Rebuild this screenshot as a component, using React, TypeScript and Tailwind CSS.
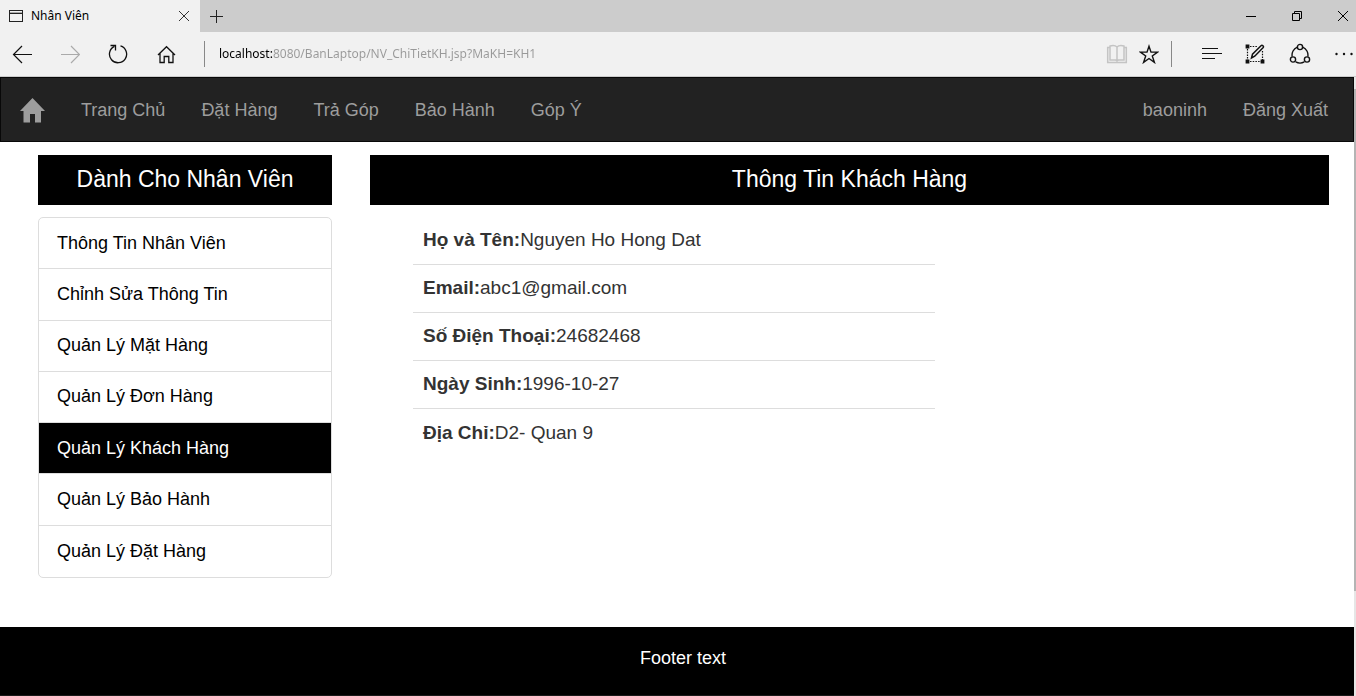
import React from "react";

const navLinks = ["Trang Chủ", "Đặt Hàng", "Trả Góp", "Bảo Hành", "Góp Ý"];

const staffLinks = [
  "Thông Tin Nhân Viên",
  "Chỉnh Sửa Thông Tin",
  "Quản Lý Mặt Hàng",
  "Quản Lý Đơn Hàng",
  "Quản Lý Khách Hàng",
  "Quản Lý Bảo Hành",
  "Quản Lý Đặt Hàng",
];

const activeLink = "Quản Lý Khách Hàng";

const customer = [
  ["Họ và Tên:", "Nguyen Ho Hong Dat"],
  ["Email:", "abc1@gmail.com"],
  ["Số Điện Thoại:", "24682468"],
  ["Ngày Sinh:", "1996-10-27"],
  ["Địa Chỉ:", "D2- Quan 9"],
];

function IconButton({ label, className = "", children }: { label: string; className?: string; children: React.ReactNode }) {
  return (
    <button type="button" aria-label={label} className={`flex shrink-0 items-center justify-center ${className}`}>
      {children}
    </button>
  );
}

function TabStrip() {
  return (
    <div className="flex h-8 bg-[#cccccc]">
      <div className="flex w-[200px] items-center bg-[#f1f1f1] pr-2 pl-2">
        <svg width="16" height="14" viewBox="0 0 16 14" fill="none" stroke="#222" shapeRendering="crispEdges" aria-hidden="true">
          <path d="M1.5 1.5h13v11h-13z" />
          <path d="M1 4.500h14" />
          <path d="M2 3h12" stroke="#aaa" />
        </svg>
        <span className="flex-1 pl-[7px] text-[12px]">Nhân Viên</span>
        <IconButton label="Close tab" className="size-4">
          <svg width="12" height="12" viewBox="0 0 12 12" stroke="#333" aria-hidden="true">
            <path d="M1 1l10 10M11 1L1 11" />
          </svg>
        </IconButton>
      </div>
      <IconButton label="New tab" className="w-8">
        <svg width="13" height="13" viewBox="0 0 13 13" stroke="#222" aria-hidden="true">
          <path d="M6.500 0v13M0 6.500h13" />
        </svg>
      </IconButton>
      <div className="flex flex-1 items-center justify-end gap-[34px] pr-[7px]">
        <IconButton label="Minimize" className="size-3">
          <svg width="12" height="12" viewBox="0 0 12 12" stroke="#000" aria-hidden="true">
            <path d="M1 6.500h10" />
          </svg>
        </IconButton>
        <IconButton label="Restore" className="size-3">
          <svg width="12" height="12" viewBox="0 0 12 12" fill="none" stroke="#000" aria-hidden="true">
            <path d="M1.500 3.500h7v7h-7zM3.500 3V1.500h7v7H9" />
          </svg>
        </IconButton>
        <IconButton label="Close window" className="size-3">
          <svg width="12" height="12" viewBox="0 0 12 12" stroke="#000" aria-hidden="true">
            <path d="M1 1l10 10M11 1L1 11" />
          </svg>
        </IconButton>
      </div>
    </div>
  );
}

function AddressBar() {
  return (
    <div className="flex h-[45px] items-center border-b border-[#cccccc] bg-[#f1f1f1] pr-[2px] pl-3">
      <div className="flex gap-7">
        <IconButton label="Back" className="size-5">
          <svg width="20" height="20" viewBox="0 0 20 20" fill="none" stroke="#111" strokeWidth="1.200" aria-hidden="true">
            <path d="M20 10.500H1.500M10 2L1.500 10.500L10 19" />
          </svg>
        </IconButton>
        <IconButton label="Forward" className="size-5">
          <svg width="20" height="20" viewBox="0 0 20 20" fill="none" stroke="#aaa" strokeWidth="1.200" aria-hidden="true">
            <path d="M1 10.500h18.500M11 2l8.500 8.500L11 19" />
          </svg>
        </IconButton>
        <IconButton label="Refresh" className="size-5">
          <svg width="20" height="20" viewBox="0 0 20 20" fill="none" stroke="#111" strokeWidth="1.300" aria-hidden="true">
            <path d="M12.500 1.900A8.600 8.600 0 1 1 6.500 2.300" />
            <path d="M2.500 1.500h5v5" />
          </svg>
        </IconButton>
        <IconButton label="Home" className="size-5">
          <svg width="20" height="20" viewBox="0 0 20 20" fill="none" stroke="#111" strokeWidth="1.300" aria-hidden="true">
            <path d="M2 11l8.500-8.300L19 11M4 9.500v9h4.200v-6h4.600v6H17v-9" />
          </svg>
        </IconButton>
      </div>
      <span className="ml-7 h-[26px] border-l border-[#888]" />
      <input
        aria-label="Address"
        defaultValue="localhost:8080/BanLaptop/NV_ChiTietKH.jsp?MaKH=KH1"
        className="ml-[14px] min-w-0 flex-1 bg-linear-to-r from-black from-[54px] to-[#999999] to-[54px] bg-clip-text text-[12px] text-transparent caret-black outline-none"
      />
      <IconButton label="Reading view">
        <svg width="22" height="20" viewBox="0 0 22 20" fill="none" stroke="#c4c4c4" strokeWidth="1.500" aria-hidden="true">
          <path d="M11 3v13M11 3C9.500 1.500 6 1.500 4 2v14h5.500L11 17l1.500-1H18V2c-2-.5-5.500-.5-7 1" />
          <path d="M4 3.500H1.700v15h18.600v-15H18" />
        </svg>
      </IconButton>
      <IconButton label="Add to favorites" className="ml-[11px]">
        <svg width="20" height="20" viewBox="0 0 20 20" fill="none" stroke="#111" strokeWidth="1.400" aria-hidden="true">
          <path d="M10 2.200l2 5.900h6.600l-5.300 3.900 2.100 6.400L10 14.500l-5.400 3.900 2.100-6.400-5.300-3.900H8z" />
        </svg>
      </IconButton>
      <span className="ml-3 h-[26px] border-l border-[#888]" />
      <IconButton label="Hub" className="ml-[30px]">
        <svg width="20" height="14" viewBox="0 0 20 14" stroke="#111" aria-hidden="true">
          <path d="M0 1.500h16M0 6.500h20M0 11.500h13" />
        </svg>
      </IconButton>
      <IconButton label="Make a web note" className="ml-[23px]">
        <svg width="20" height="20" viewBox="0 0 20 20" fill="none" stroke="#111" aria-hidden="true">
          <path d="M5 2.500h7M2.500 5v11M5 17.500h11M17.500 7v9" strokeDasharray="1.500 1.200" strokeWidth="1.200" />
          <path d="M1.500 1.500h2v2h-2zM1.500 16.500h2v2h-2zM16.500 16.500h2v2h-2z" strokeWidth="1.800" />
          <path d="M6.500 14l1-3.800L16 1.700c1.200-1.200 3.300.5 2 2L9.700 12.200z" strokeWidth="1.500" />
        </svg>
      </IconButton>
      <IconButton label="Share" className="ml-6">
        <svg width="22" height="22" viewBox="0 0 22 22" fill="none" stroke="#111" strokeWidth="1.400" aria-hidden="true">
          <path d="M8.300 4.100A8.600 8.600 0 0 0 3.200 13.700M13.700 4.100a8.600 8.600 0 0 1 5.100 9.600M6.700 18.900a8.600 8.600 0 0 0 8.600 0" />
          <circle cx="11" cy="4" r="2.600" />
          <circle cx="4" cy="16.500" r="2.600" />
          <circle cx="18" cy="16.500" r="2.600" />
        </svg>
      </IconButton>
      <IconButton label="More" className="ml-6">
        <svg width="19" height="4" viewBox="0 0 19 4" fill="#111" aria-hidden="true">
          <circle cx="1.500" cy="2" r="1.200" />
          <circle cx="9" cy="2" r="1.200" />
          <circle cx="16.500" cy="2" r="1.200" />
        </svg>
      </IconButton>
    </div>
  );
}

function SiteNav() {
  return (
    <nav className="flex h-[65px] items-center gap-9 border border-[#080808] bg-[#222222] pt-px pr-[25px] pl-[19px] text-[18px] text-[#9d9d9d]">
      <a href="#" aria-label="Home">
        <svg width="25" height="25" viewBox="0 0 25 25" fill="#9d9d9d" aria-hidden="true">
          <path d="M12.500 0L25 13h-4v11.500h-6V16h-5v8.500H3.500V13H0z" />
        </svg>
      </a>
      {navLinks.map((label) => (
        <a key={label} href="#">{label}</a>
      ))}
      <a href="#" className="ml-auto">baoninh</a>
      <a href="#">Đăng Xuất</a>
    </nav>
  );
}

function Banner({ children }: { children: React.ReactNode }) {
  return (
    <h2 className="h-[50px] bg-black text-center text-[23px] leading-[48px] text-white">{children}</h2>
  );
}

function StaffMenu() {
  return (
    <aside className="w-[294px] shrink-0">
      <Banner>Dành Cho Nhân Viên</Banner>
      <ul className="mt-3 grid min-h-[361px] auto-rows-fr divide-y divide-[#dddddd] rounded-[5px] border border-[#dddddd] text-[18px]">
        {staffLinks.map((label) => (
          <li key={label} className="flex">
            <a
              href="#"
              aria-current={label === activeLink ? "page" : undefined}
              className={`flex flex-1 items-center px-[18px] ${label === activeLink ? "bg-black text-white" : "text-black"}`}
            >
              {label}
            </a>
          </li>
        ))}
      </ul>
    </aside>
  );
}

function CustomerDetails() {
  return (
    <section className="min-w-0 flex-1">
      <Banner>Thông Tin Khách Hàng</Banner>
      <table className="mt-[11px] ml-[43px] w-[522px] max-w-full text-[19px] text-[#333333]">
        <tbody className="divide-y divide-[#dddddd]">
          {customer.map(([label, value]) => (
            <tr key={label} className="h-12">
              <td className="px-[10px] pt-px">
                <strong>{label}</strong>
                {value}
              </td>
            </tr>
          ))}
        </tbody>
      </table>
    </section>
  );
}

export default function App() {
  return (
    <div className="flex min-h-screen flex-col bg-white text-black">
      <header className="font-['Noto_Sans','Open_Sans',sans-serif]">
        <TabStrip />
        <AddressBar />
      </header>
      <div className="flex flex-1">
        <div className="flex min-w-0 flex-1 flex-col font-['Liberation_Sans',Arial,sans-serif]">
          <SiteNav />
          <main className="flex gap-[38px] pt-[13px] pr-[25px] pb-[49px] pl-[38px]">
            <StaffMenu />
            <CustomerDetails />
          </main>
          <footer className="flex-1 border-b border-[#1a1a1a] bg-black pt-[18px] pl-3 text-center text-[18px] leading-[26px] text-white">
            Footer text
          </footer>
        </div>
        <div className="flex w-[2px] flex-col bg-[#e6e6e6] pt-3 pb-[105px]">
          <div className="flex-1 bg-[#b4b4b4]" />
        </div>
      </div>
    </div>
  );
}
